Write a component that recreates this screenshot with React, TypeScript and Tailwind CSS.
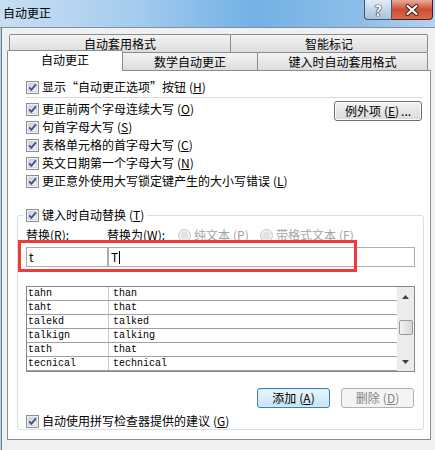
import React from 'react';

function CheckBox({ checked = true }: { checked?: boolean }) {
  return (
    <svg width="13" height="13" viewBox="0 0 13 13" className="shrink-0">
      <defs>
        <linearGradient id="cbfill" x1="0" y1="0" x2="1" y2="1">
          <stop offset="0" stopColor="#c6cbd2" />
          <stop offset="1" stopColor="#fbfbfb" />
        </linearGradient>
      </defs>
      <rect x="0.5" y="0.5" width="12" height="12" fill="#f4f4f4" stroke="#8e8f8f" />
      <rect x="2.5" y="2.5" width="8" height="8" fill="url(#cbfill)" stroke="#d2d5d9" />
      {checked && <path d="M3.2 6.4 L5.4 8.9 L9.9 3.4" fill="none" stroke="#3f5495" strokeWidth="1.9" />}
    </svg>
  );
}

function Radio({ label, k }: { label: string; k: string }) {
  return (
    <div className="flex items-center gap-[3px] text-[#a3a3a3]">
      <svg width="13" height="13" viewBox="0 0 13 13" className="shrink-0">
        <circle cx="6.5" cy="6.5" r="6" fill="#f4f4f4" stroke="#c2c4c6" />
        <circle cx="6.5" cy="6.5" r="4" fill="#e3e3e3" />
      </svg>
      <span>
        {label}
        <Key c={k} />
      </span>
    </div>
  );
}

function Key({ c }: { c: string }) {
  return (
    <span className="ml-[3px]">
      (<u>{c}</u>)
    </span>
  );
}

function CheckRow({ text, k }: { text: string; k: string }) {
  return (
    <div className="flex h-[18px] items-center gap-[3px]">
      <CheckBox />
      <span className="whitespace-nowrap">
        {text}
        <Key c={k} />
      </span>
    </div>
  );
}

function Button({ children, variant = 'normal', className = '' }: { children: React.ReactNode; variant?: 'normal' | 'default' | 'disabled'; className?: string }) {
  const look =
    variant === 'default'
      ? 'border-[#3c7fb1] bg-linear-to-b from-[#eaf6fd] to-[#c4e3f6] shadow-[inset_0_0_0_1px_#d2ecfa]'
      : variant === 'disabled'
        ? 'border-[#adb2b5] bg-[#f4f4f4] text-[#838383]'
        : 'border-[#707070] bg-linear-to-b from-[#f3f3f3] to-[#d9d9d9] shadow-[inset_0_0_0_1px_#fcfcfc]';
  return (
    <div className={`flex h-[20px] items-center justify-center rounded-[3px] border ${look} ${className}`}>
      {children}
    </div>
  );
}

const rows = [
  ['tahn', 'than'],
  ['taht', 'that'],
  ['talekd', 'talked'],
  ['talkign', 'talking'],
  ['tath', 'that'],
  ['tecnical', 'technical'],
];

export default function App() {
  return (
    <div className="relative h-[450px] w-[435px] overflow-hidden bg-[#f0f0f0] font-['Noto_Sans_CJK_SC',sans-serif] text-[12px] leading-none text-black">
      {/* title bar */}
      <div className="flex h-[27px] justify-between bg-[linear-gradient(90deg,#c9def3_0%,#a6cdef_30%,#73b1e5_58%,#8cbde8_82%,#b3d2ee_100%)]">
        <div className="pl-[3px] pt-[6px] text-[12px] leading-[14px] text-black">自动更正</div>
        <div className="flex items-start pr-[2px]">
          <div className="flex h-[20px] w-[28px] items-center justify-center rounded-bl-[4px] border border-t-0 border-[#46576d] bg-linear-to-b from-[#e4ecf6] via-[#c4d5e9] to-[#a9c2de] text-[14px] font-bold text-white [text-shadow:0_0_1px_#1c2a3c,0_0_1px_#1c2a3c,0_0_1px_#1c2a3c]">
            ?
          </div>
          <div className="flex h-[20px] w-[41px] items-center justify-center rounded-br-[4px] border border-t-0 border-l-0 border-[#4a1c14] bg-linear-to-b from-[#e9a99a] via-[#cd4d32] to-[#d86a4f]">
            <svg width="14" height="12" viewBox="0 0 14 12">
              <path d="M2.5 2 L11.5 10 M11.5 2 L2.5 10" stroke="#3a1a14" strokeWidth="4" strokeLinecap="round" />
              <path d="M2.5 2 L11.5 10 M11.5 2 L2.5 10" stroke="#ffffff" strokeWidth="2.2" strokeLinecap="round" />
            </svg>
          </div>
        </div>
      </div>

      {/* client */}
      <div className="flex h-[423px] border-t border-[#7f90a3]">
        <div className="w-[1px] bg-[#b7cfe8]" />
        <div className="w-[1px] bg-[#6e7d8d]" />
        <div className="flex-1 pl-[5px] pt-[6px]">
          {/* back tab row */}
          <div className="ml-[2px] flex h-[18px]">
            <div className="flex w-[222px] items-center justify-center rounded-t-[2px] border border-b-0 border-[#898c95] bg-linear-to-b from-[#f4f4f4] to-[#dcdcdc]">
              自动套用格式
            </div>
            <div className="-ml-[1px] flex w-[198px] items-center justify-center rounded-t-[2px] border border-b-0 border-[#898c95] bg-linear-to-b from-[#f4f4f4] to-[#dcdcdc]">
              智能标记
            </div>
          </div>
          {/* front tab row */}
          <div className="-mt-[2px] flex h-[20px] items-end">
            <div className="relative z-10 -mb-[1px] flex h-[21px] w-[116px] items-center justify-center rounded-t-[2px] border border-b-0 border-[#898c95] bg-white pb-[2px]">
              自动更正
            </div>
            <div className="-ml-[1px] flex h-[18px] w-[136px] items-center justify-center rounded-t-[2px] border border-b-0 border-[#898c95] bg-linear-to-b from-[#f4f4f4] to-[#dcdcdc]">
              数学自动更正
            </div>
            <div className="-ml-[1px] flex h-[18px] w-[171px] items-center justify-center rounded-t-[2px] border border-b-0 border-[#898c95] bg-linear-to-b from-[#f4f4f4] to-[#dcdcdc]">
              键入时自动套用格式
            </div>
          </div>

          {/* panel */}
          <div className="h-[370px] w-[424px] border border-[#898c95] bg-white">
            <div className="pl-[18px] pt-[7px]">
              <CheckRow text="显示“自动更正选项”按钮" k="H" />
            </div>
            <div className="ml-[18px] mr-[7px] mt-[1px] h-[1px] bg-[#dcdcdc]" />
            <div className="mt-[2px] flex justify-between pl-[18px] pr-[8px]">
              <div className="flex flex-col">
                <CheckRow text="更正前两个字母连续大写" k="O" />
                <CheckRow text="句首字母大写" k="S" />
                <CheckRow text="表格单元格的首字母大写" k="C" />
                <CheckRow text="英文日期第一个字母大写" k="N" />
                <CheckRow text="更正意外使用大写锁定键产生的大小写错误" k="L" />
              </div>
              <Button className="mt-[1px] w-[88px]">
                例外项<Key c="E" />
                <span className="ml-[2px]">...</span>
              </Button>
            </div>

            {/* group box */}
            <fieldset className="ml-[9px] mr-[6px] mt-[17px] rounded-[3px] border border-[#d5dfe5] px-[8px] pb-0">
              <legend className="-ml-[3px] px-[3px]">
                <div className="flex h-[16px] items-center gap-[3px]">
                  <CheckBox />
                  <span>
                    键入时自动替换<Key c="T" />
                  </span>
                </div>
              </legend>
              <div className="mt-[4px] flex h-[16px] items-center">
                <div className="w-[81px]">
                  替换<span>(<u>R</u>):</span>
                </div>
                <div className="w-[71px]">
                  替换为<span>(<u>W</u>):</span>
                </div>
                <div className="w-[82px]">
                  <Radio label="纯文本" k="P" />
                </div>
                <Radio label="带格式文本" k="F" />
              </div>
              <div className="mt-[4px] flex h-[20px]">
                <div className="flex w-[82px] items-center border border-[#abadb3] pl-[2px]">t</div>
                <div className="flex flex-1 items-center border border-[#abadb3] pl-[2px]">
                  T<span className="ml-[1px] h-[13px] w-[1px] bg-black" />
                </div>
              </div>
              {/* list */}
              <div className="mt-[19px] flex h-[86px] border border-[#828790] font-['Liberation_Mono',monospace] text-[10px]">
                <div className="flex flex-1 flex-col">
                  {rows.map(([a, b]) => (
                    <div key={a} className="flex h-[14px] border-b border-[#a0a0a0]">
                      <div className="flex w-[82px] items-center border-r border-[#c8c8c8] pl-[1px]">{a}</div>
                      <div className="flex items-center pl-[4px]">{b}</div>
                    </div>
                  ))}
                </div>
                <div className="flex w-[17px] flex-col items-center bg-[#ececec]">
                  <svg width="7" height="4" viewBox="0 0 7 4" className="mt-[8px]">
                    <path d="M0 4 L3.5 0 L7 4 Z" fill="#404040" />
                  </svg>
                  <div className="mt-[21px] h-[15px] w-[14px] rounded-[2px] border border-[#9b9b9b] bg-linear-to-r from-[#f3f3f3] to-[#d7d7d7]" />
                  <svg width="7" height="4" viewBox="0 0 7 4" className="mt-auto mb-[7px]">
                    <path d="M0 0 L7 0 L3.5 4 Z" fill="#404040" />
                  </svg>
                </div>
              </div>
              <div className="mt-[16px] flex justify-end gap-[11px] pr-[1px]">
                <Button variant="default" className="w-[73px]">
                  添加<Key c="A" />
                </Button>
                <Button variant="disabled" className="w-[73px]">
                  删除<Key c="D" />
                </Button>
              </div>
              <div className="mt-[5px] flex h-[16px] items-center gap-[3px]">
                <CheckBox />
                <span>
                  自动使用拼写检查器提供的建议<Key c="G" />
                </span>
              </div>
            </fieldset>
          </div>
        </div>
      </div>

      {/* red highlight annotation */}
      <div className="absolute left-[18px] top-[240px] h-[32px] w-[339px] border-[3px] border-[#f03a3a]" />
    </div>
  );
}
